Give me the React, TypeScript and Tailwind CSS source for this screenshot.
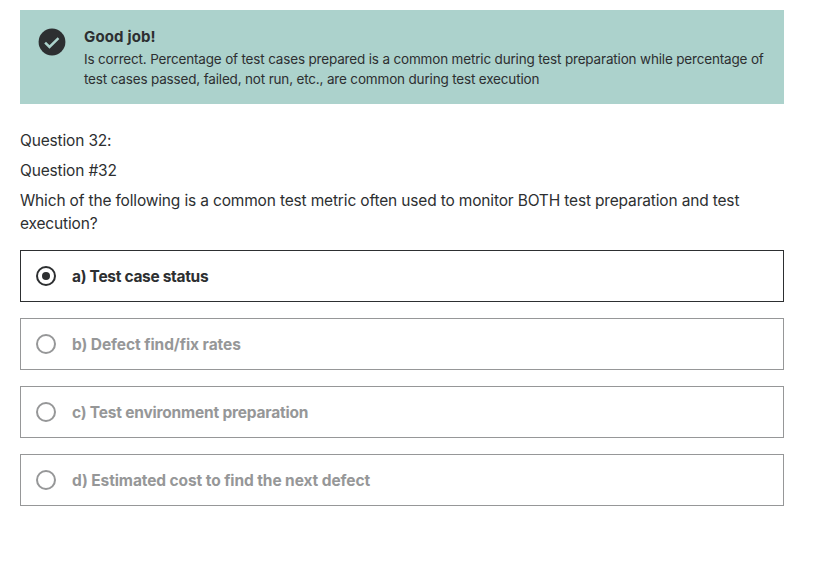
const options = [
  { text: 'a) Test case status', checked: true, tracking: 'tracking-[-0.31px]' },
  { text: 'b) Defect find/fix rates', checked: false, tracking: 'tracking-[-0.08px]' },
  { text: 'c) Test environment preparation', checked: false, tracking: 'tracking-[-0.2px]' },
  { text: 'd) Estimated cost to find the next defect', checked: false, tracking: 'tracking-[-0.1px]' },
];

export default function App() {
  return (
    <main className="min-h-[579px] w-[823px] bg-white pt-[10px] pl-5 font-['Inter','Liberation_Sans',sans-serif] text-[#2d2f31]">
      <section className="flex h-[94px] w-[764px] bg-[#acd2cc] pt-[18px] pl-[18px]">
        <svg width="28" height="28" viewBox="0 0 28 28" className="shrink-0">
          <circle cx="14" cy="14" r="13.4" fill="#2d2f31" />
          <path d="m7.1 14.6 4.4 4.3 9-8.8" fill="none" stroke="#acd2cc" strokeWidth="2.5" />
        </svg>
        <div className="ml-[18px] w-[690px]">
          <h2 className="-mt-px text-[15px] leading-5 font-bold tracking-[0.15px]">Good job!</h2>
          <p className="mt-[2px] text-[13.5px] leading-5 tracking-[-0.17px]">
            Is correct. Percentage of test cases prepared is a common metric during test preparation while percentage of
            test cases passed, failed, not run, etc., are common during test execution
          </p>
        </div>
      </section>
      <section className="mt-[25px] flex w-[764px] flex-col gap-[7px] text-[15.5px] leading-[23px] tracking-[-0.163px]">
        <p>Question 32:</p>
        <p>Question #32</p>
        <p>Which of the following is a common test metric often used to monitor BOTH test preparation and test execution?</p>
      </section>
      <div className="mt-[15px] flex w-[764px] flex-col gap-4 text-[15.5px] leading-5 font-bold">
        {options.map((o) => (
          <label
            key={o.text}
            className={`flex h-[52px] items-center gap-4 border pl-[15px] ${o.checked ? 'border-[#2d2f31]' : 'border-[#969798] text-[#969798]'}`}
          >
            <svg width="20" height="20" viewBox="0 0 20 20" className="shrink-0">
              <circle cx="10" cy="10" r="9" fill="none" stroke="currentColor" strokeWidth="2" />
              {o.checked && <circle cx="10" cy="10" r="4" fill="currentColor" />}
            </svg>
            <span className={`pt-px ${o.tracking}`}>{o.text}</span>
          </label>
        ))}
      </div>
    </main>
  );
}
